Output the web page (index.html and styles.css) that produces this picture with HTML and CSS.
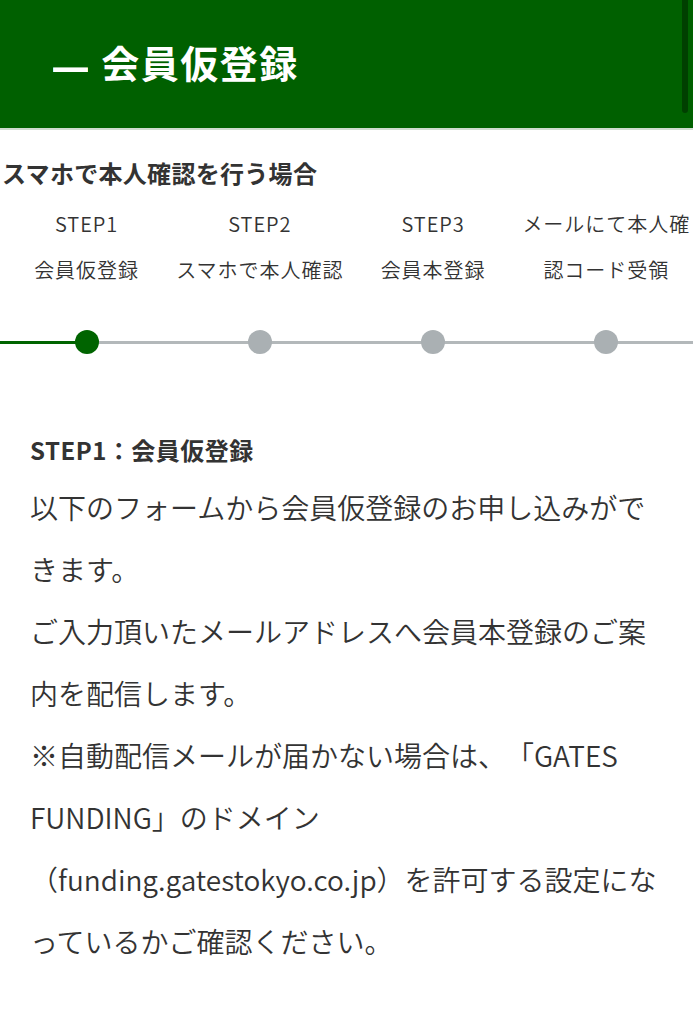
FILE: index.html
```html
<!DOCTYPE html>
<html lang="ja">
<head>
  <meta charset="UTF-8">
  <meta name="viewport" content="width=device-width, initial-scale=1.0">
  <title>会員仮登録</title>
  <link rel="stylesheet" href="styles.css">
</head>
<body>
  <header class="page-header">
    <h1 class="page-title"><span class="title-dash">—</span> 会員仮登録</h1>
    <div class="scroll-thumb"></div>
  </header>

  <section class="flow">
    <h2 class="flow-title">スマホで本人確認を行う場合</h2>

    <div class="steps">
      <div class="step">STEP1<br>会員仮登録</div>
      <div class="step">STEP2<br>スマホで本人確認</div>
      <div class="step">STEP3<br>会員本登録</div>
      <div class="step">メールにて本人確認コード受領</div>
    </div>

    <!-- 進捗バー -->
    <div class="progress">
      <div class="track"></div>
      <span class="dot active"></span>
      <span class="dot"></span>
      <span class="dot"></span>
      <span class="dot"></span>
    </div>
  </section>

  <section class="intro">
    <h3 class="intro-title">STEP1：会員仮登録</h3>
    <p class="intro-text">以下のフォームから会員仮登録のお申し込みができます。<br>ご入力頂いたメールアドレスへ会員本登録のご案内を配信します。<br>※自動配信メールが届かない場合は、「GATES FUNDING」のドメイン（funding.gatestokyo.co.jp）を許可する設定になっているかご確認ください。</p>
  </section>
</body>
</html>
```

FILE: styles.css
```css
body {
  margin: 0;
  padding: 0;
  font-family: "Noto Sans CJK JP", "Noto Sans", sans-serif;
  background: #fff;
  color: #333;
  text-spacing-trim: space-all;
}

.page-header {
  position: relative;
  height: 122px;
  background: #006000;
  border-bottom: 2px solid #cfdccf;
  display: flex;
  align-items: center;
  padding: 0 0 6px 53px;
}

.page-title {
  margin: 0;
  color: #fff;
  font-size: 38px;
  font-weight: 700;
  letter-spacing: 1.5px;
}

.title-dash {
  display: inline-block;
  margin-right: 3px;
  font-family: "Liberation Sans", sans-serif;
  font-size: 35px;
  letter-spacing: 0;
  transform: scaleY(1.3);
}

.scroll-thumb {
  position: absolute;
  top: 0;
  right: 5px;
  width: 6px;
  height: 113px;
  border-radius: 0 0 3px 3px;
  background: #003f00;
}

.flow {
  padding-top: 23px;
}

.flow-title {
  margin: 0;
  padding-left: 2px;
  font-size: 24px;
  line-height: 40px;
  font-weight: 700;
  letter-spacing: 0.3px;
  color: #333;
}

.steps {
  display: grid;
  grid-template-columns: repeat(4, 1fr);
  margin-top: 8px;
}

.step {
  text-align: center;
  font-size: 20px;
  font-weight: 350;
  line-height: 46px;
  letter-spacing: 1px;
  color: #333;
}

.progress {
  display: grid;
  grid-template-columns: repeat(4, 1fr);
  height: 30px;
  margin-top: 34px;
}

.track {
  grid-row: 1;
  grid-column: 1 / 5;
  align-self: center;
  height: 3px;
  background: linear-gradient(to right, #006400 12.5%, #b3b8ba 12.5%);
}

.dot {
  grid-row: 1;
  align-self: center;
  justify-self: center;
  width: 24px;
  height: 24px;
  border-radius: 50%;
  background: #aab0b3;
}

.dot:nth-of-type(1) { grid-column: 1; }
.dot:nth-of-type(2) { grid-column: 2; }
.dot:nth-of-type(3) { grid-column: 3; }
.dot:nth-of-type(4) { grid-column: 4; }

.dot.active {
  background: #006400;
}

.intro {
  padding: 67px 30px 40px;
}

.intro-title {
  margin: 0;
  font-size: 24px;
  line-height: 52px;
  font-weight: 700;
  letter-spacing: 0.5px;
  color: #333;
}

.intro-text {
  margin: 0;
  font-size: 28px;
  font-weight: 350;
  line-height: 62px;
  color: #333;
}
```
